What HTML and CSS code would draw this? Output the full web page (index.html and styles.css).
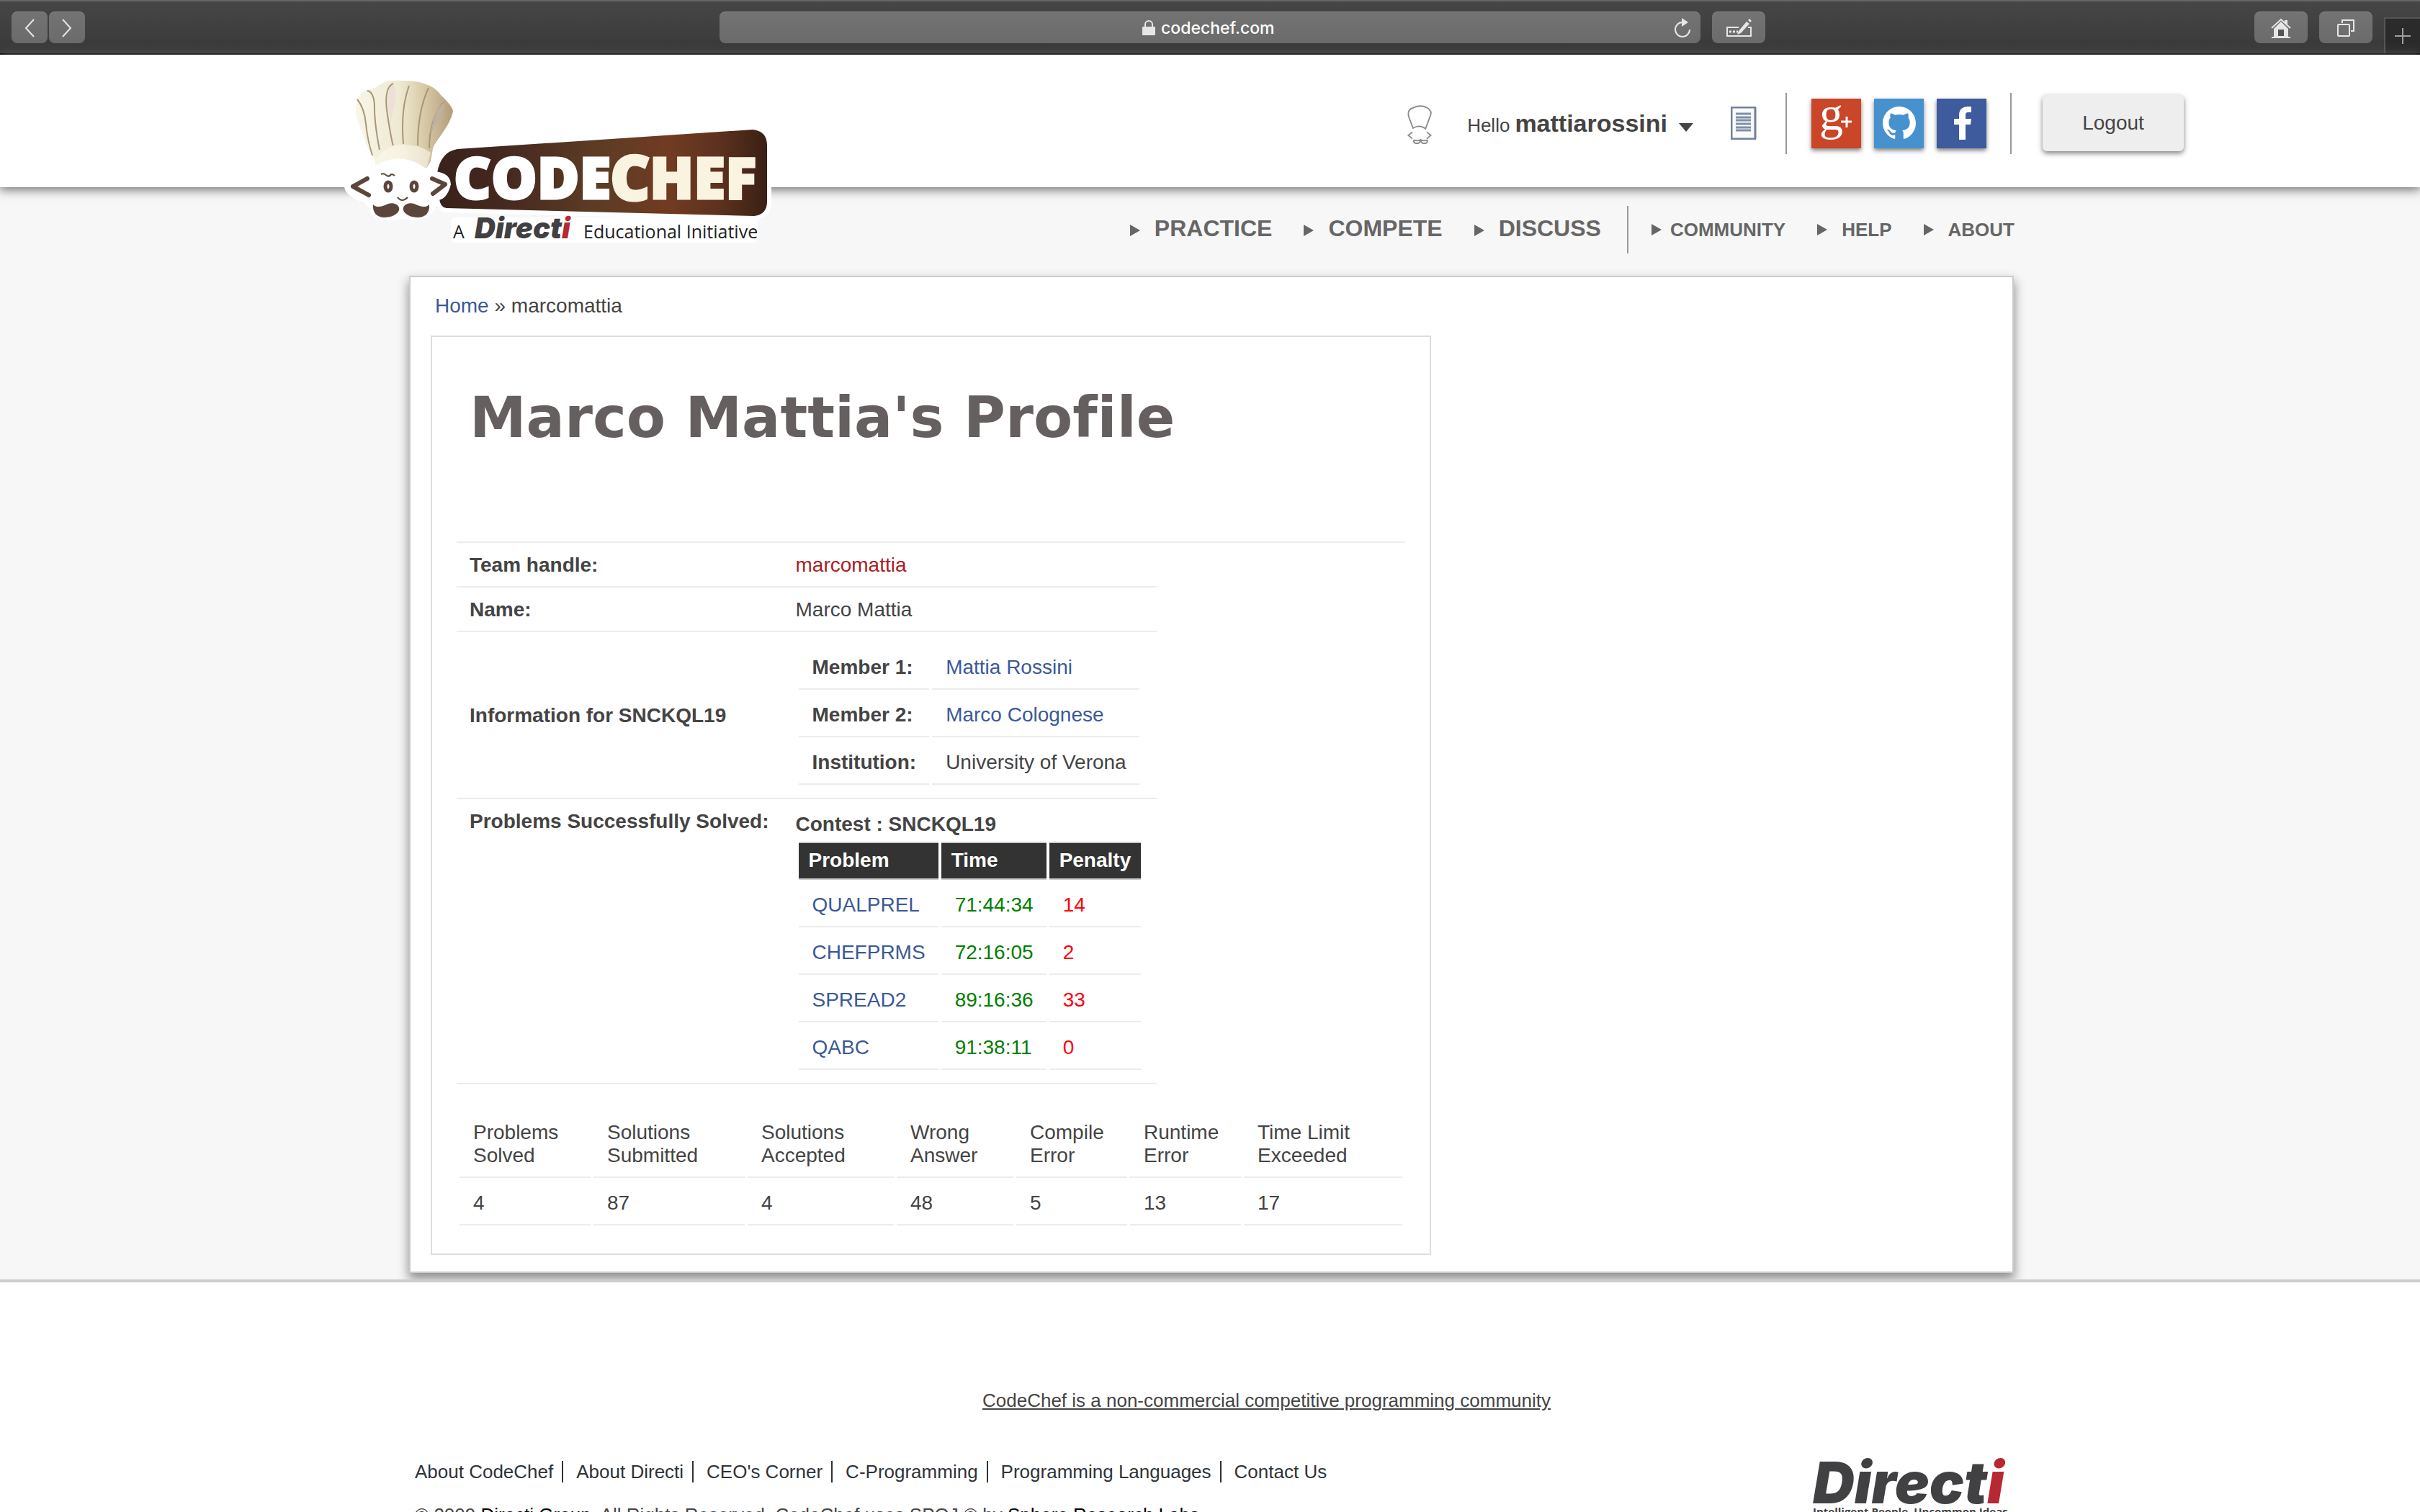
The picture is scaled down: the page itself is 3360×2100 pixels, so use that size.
FILE: index.html
```html
<!DOCTYPE html>
<html lang="en">
<head>
<meta charset="utf-8">
<title>marcomattia | CodeChef</title>
<link rel="stylesheet" href="styles.css">
</head>
<body>
<div class="browser-bar">
  <div class="bar-left">
    <button class="bar-btn nav-btn" type="button" aria-label="Back"><svg width="16" height="26" viewBox="0 0 16 26"><path d="M14 1 3 13l11 12" class="line"/></svg></button>
    <button class="bar-btn nav-btn" type="button" aria-label="Forward"><svg width="16" height="26" viewBox="0 0 16 26"><path d="M2 1l11 12L2 25" class="line"/></svg></button>
  </div>
  <div class="url-field">
    <label class="url-center">
      <svg width="18" height="22" viewBox="0 0 18 22"><rect x="0" y="9" width="18" height="12" rx="1" class="solid"/><path d="M4 10V6a5 5 0 0 1 10 0v4" class="line"/></svg>
      <input class="url-input" type="text" value="codechef.com" aria-label="Address">
    </label>
    <button class="reload" type="button" aria-label="Reload"><svg width="26" height="28" viewBox="0 0 26 28"><path d="M13 6a10 10 0 1 0 10 10" class="line"/><path d="M12 0l9 6-9 6z" class="solid"/></svg></button>
  </div>
  <div class="bar-right">
    <button class="bar-btn" type="button" aria-label="Autofill"><svg width="38" height="26" viewBox="0 0 38 26"><path d="M19 12H3v12h33V12h-4" class="line"/><path d="M6 18h3M11 18h3M16 18h2" class="line thin"/><path d="M30 4l4 3-12 13-5 2 2-5zM32 2l2-2 3 3-2 2z" class="solid"/></svg></button>
    <span class="spacer"></span>
    <button class="bar-btn" type="button" aria-label="Home"><svg width="28" height="28" viewBox="0 0 28 28"><path d="M14 5l10 10v11H4V15zM19 3h4v7l-4-4z" class="solid"/><path d="M1 14L14 2l13 12" class="line"/><path d="M1 27h26" class="line"/><rect x="10" y="16" width="8" height="9" fill="#555"/></svg></button>
    <button class="bar-btn" type="button" aria-label="Show tabs"><svg width="26" height="26" viewBox="0 0 26 26"><rect x="2" y="8" width="16" height="16" rx="1" class="line"/><path d="M8 6V2h16v15h-4" class="line"/></svg></button>
    <button class="new-tab" type="button" aria-label="New tab"><svg width="22" height="22" viewBox="0 0 22 22"><path d="M11 0v22M0 11h22" stroke="#a0a0a0" stroke-width="2"/></svg></button>
  </div>
</div>

<header class="site-header">
  <a class="logo" href="#" aria-label="CodeChef home">
    <svg width="610" height="245" viewBox="470 100 610 245">
      <defs>
        <linearGradient id="plate" x1="0" x2="1" y1="0" y2="0">
          <stop offset="0" stop-color="#38221a"/><stop offset=".2" stop-color="#452820"/><stop offset=".48" stop-color="#5c3c24"/><stop offset=".7" stop-color="#713b22"/><stop offset=".85" stop-color="#5d321e"/><stop offset="1" stop-color="#3b2014"/>
        </linearGradient>
        <linearGradient id="hat" x1="0" x2="1" y1="0" y2="0">
          <stop offset="0" stop-color="#f8f6e8"/><stop offset=".45" stop-color="#efe9d2"/><stop offset=".7" stop-color="#d8caa8"/><stop offset="1" stop-color="#b39c78"/>
        </linearGradient>
      </defs>
      <g class="halo">
        <path d="M635 207L1045 180Q1065 182 1065 202V280Q1065 298 1047 300L620 289Q611 288 610 276L607 240Q612 211 635 207z"/>
        <path d="M520 232Q556 212 596 236L604 245Q622 246 622 262Q618 278 604 276L598 288Q590 304 557 298Q520 306 516 284L508 276Q484 268 484 258Q496 244 512 244z"/>
        <path d="M632 308H1046V331H632z"/>
      </g>
      <path fill="url(#plate)" d="M635 207L1045 180Q1065 182 1065 202V280Q1065 298 1047 300L620 289Q611 288 610 276L607 240Q612 211 635 207z"/>
      <path fill="#fff" d="M520 232Q556 212 596 236L604 238Q625 240 626 256Q620 280 604 278L598 288Q590 304 557 298Q520 306 516 284L508 276Q480 268 480 258Q496 240 512 240z"/>
      <path fill="url(#hat)" d="M494 152C494 134 502 124 521 122C530 114 540 111 556 112C582 112 602 117 612 132Q627 146 629 154C626 174 604 196 601 206L598 224L592 234Q556 208 521 230V222Q508 204 506 192Q494 166 494 152z"/>
      <path fill="#fbf9ee" d="M521 222Q530 208 548 202Q578 198 598 212L592 234Q556 208 521 230z" opacity=".6"/>
      <g fill="none" stroke="#a89678" stroke-width="2">
        <path d="M496 138Q506 150 508 172T517 216"/><path d="M510 126Q520 128 520 150T527 208"/><path d="M546 116Q532 122 538 160T546 202"/><path d="M568 119Q556 152 560 200"/><path d="M595 122Q580 154 580 202"/><path d="M616 142Q596 166 596 206"/>
      </g>
      <path fill="#eee0d6" d="M546 117Q552 124 548 146L542 170Q534 124 546 117z"/>
      <path fill="#c0b0a0" d="M616 143Q618 150 610 164L598 186Q602 154 616 143z"/>
      <g fill="none" stroke="#5c463c" stroke-width="6" stroke-linecap="round" stroke-linejoin="round">
        <path d="M510 248L490 259L512 271"/><path d="M600 248L618 256L601 269"/>
      </g>
      <g fill="#fff" stroke="#5c463c" stroke-width="5"><ellipse cx="539" cy="259" rx="4" ry="6"/><ellipse cx="575" cy="259" rx="4" ry="6"/></g>
      <path d="M529 242q4-2 8 2q4 2 6-2q3 0 5 2M552 274q6 8 14 0" fill="none" stroke="#5c463c" stroke-width="2"/>
      <path fill="#5c463c" d="M518 284C524 290 532 286 539 283C548 280 556 286 554 292C552 298 543 302 534 302C522 302 517 294 518 284zM596 284C590 290 582 286 575 283C566 280 558 286 560 292C562 298 571 302 580 302C592 302 597 294 596 284z"/>
      <text x="630" y="276" class="logo-word white">CODE</text>
      <text x="847" y="278" class="logo-word cream big">C</text><text x="902" y="276" class="logo-word cream">HEF</text>
      <text x="629" y="331" class="logo-sub">A</text><text x="659" y="331" class="logo-directi">Direct<tspan class="red">i</tspan></text><text x="810" y="331" class="logo-sub">Educational Initiative</text>
    </svg>
  </a>
  <svg class="chef-icon" width="44" height="57" viewBox="0 0 48 62" fill="none" stroke="#8a8a8a" stroke-width="2"><path d="M14 38L8 22Q4 10 15 7Q25 2 35 7Q44 12 40 20L33 39Q24 32 14 38zM13 44l-6 5l6 5M35 44l6 5l-6 5"/><path d="M15 56q5 2 10 0q0 6-6 5q-4 0-4-5M36 56q-5 2-10 0q0 6 6 5q4 0 4-5"/></svg>
  <button class="user-menu" type="button">Hello <b>mattiarossini</b><svg width="20" height="12" viewBox="0 0 20 12"><path d="M0 0h20L10 12z" fill="#444"/></svg></button>
  <a class="doc-link" href="#" aria-label="My submissions"><svg width="36" height="46" viewBox="0 0 36 46"><rect x="1" y="1" width="33" height="44" rx="1" fill="#f8fafc" stroke="#71819a" stroke-width="3"/><path d="M7 10h21M7 15h21M7 19h21M7 24h21M7 29h21M7 33h21" stroke="#7f8fa8" stroke-width="3"/></svg></a>
  <span class="divider"></span>
  <div class="social">
    <a class="gplus" href="#" aria-label="Google Plus"><svg width="69" height="69" viewBox="0 0 69 69"><text x="11" y="43" class="g-letter">g</text><path d="M41 32h15M49 25v15" stroke="#fff" stroke-width="3"/></svg></a>
    <a class="github" href="#" aria-label="GitHub"><svg width="46" height="46" viewBox="0 0 16 16"><path fill="#fff" d="M8 0C3.58 0 0 3.58 0 8c0 3.54 2.29 6.53 5.47 7.59.4.07.55-.17.55-.38 0-.19-.01-.82-.01-1.49-2.01.37-2.53-.49-2.69-.94-.09-.23-.48-.94-.82-1.13-.28-.15-.68-.52-.01-.53.63-.01 1.08.58 1.23.82.72 1.21 1.87.87 2.33.66.07-.52.28-.87.51-1.07-1.78-.2-3.64-.89-3.64-3.95 0-.87.31-1.59.82-2.15-.08-.2-.36-1.02.08-2.12 0 0 .67-.21 2.2.82.64-.18 1.32-.27 2-.27s1.36.09 2 .27c1.53-1.04 2.2-.82 2.2-.82.44 1.1.16 1.92.08 2.12.51.56.82 1.27.82 2.15 0 3.07-1.87 3.75-3.65 3.95.29.25.54.73.54 1.48 0 1.07-.01 1.93-.01 2.2 0 .21.15.46.55.38A8.01 8.01 0 0 0 16 8c0-4.42-3.58-8-8-8z"/></svg></a>
    <a class="facebook" href="#" aria-label="Facebook"><svg width="24" height="46" viewBox="0 0 24 46"><path fill="#fff" d="M7 46V25H0V17H7V12Q7 1 18 0H24V8H19Q16 8 16 12V17H24L23 25H16V46z"/></svg></a>
  </div>
  <span class="divider"></span>
  <button class="logout" type="button">Logout</button>
</header>

<main class="content-area">
  <nav class="main-nav">
    <a class="major" href="#">PRACTICE</a>
    <a class="major" href="#">COMPETE</a>
    <a class="major" href="#">DISCUSS</a>
    <span class="nav-divider"></span>
    <a class="near" href="#">COMMUNITY</a>
    <a href="#">HELP</a>
    <a href="#">ABOUT</a>
  </nav>
  <div class="panel">
    <div class="breadcrumb"><a href="#">Home</a> » marcomattia</div>
    <section class="profile">
      <h1>Marco Mattia's Profile</h1>
      <hr>
      <table class="details">
        <tr><th scope="row">Team handle:</th><td class="handle">marcomattia</td></tr>
        <tr><th scope="row">Name:</th><td>Marco Mattia</td></tr>
        <tr class="nested"><th scope="row">Information for SNCKQL19</th><td>
          <table class="inner">
            <tr><th scope="row">Member 1:</th><td><a href="#">Mattia Rossini</a></td></tr>
            <tr><th scope="row">Member 2:</th><td><a href="#">Marco Colognese</a></td></tr>
            <tr><th scope="row">Institution:</th><td>University of Verona</td></tr>
          </table>
        </td></tr>
        <tr class="top"><th scope="row">Problems Successfully Solved:</th><td>
          <b class="contest">Contest : SNCKQL19</b>
          <table class="inner problems">
            <thead><tr><th>Problem</th><th>Time</th><th>Penalty</th></tr></thead>
            <tbody>
            <tr><td><a href="#">QUALPREL</a></td><td class="time">71:44:34</td><td class="penalty">14</td></tr>
            <tr><td><a href="#">CHEFPRMS</a></td><td class="time">72:16:05</td><td class="penalty">2</td></tr>
            <tr><td><a href="#">SPREAD2</a></td><td class="time">89:16:36</td><td class="penalty">33</td></tr>
            <tr><td><a href="#">QABC</a></td><td class="time">91:38:11</td><td class="penalty">0</td></tr>
            </tbody>
          </table>
        </td></tr>
      </table>
      <table class="inner stats">
        <colgroup><col class="c1"><col class="c2"><col class="c3"><col class="c4"><col class="c5"><col class="c5"><col></colgroup>
        <tr><td>Problems<br>Solved</td><td>Solutions<br>Submitted</td><td>Solutions<br>Accepted</td><td>Wrong<br>Answer</td><td>Compile<br>Error</td><td>Runtime<br>Error</td><td>Time Limit<br>Exceeded</td></tr>
        <tr><td>4</td><td>87</td><td>4</td><td>48</td><td>5</td><td>13</td><td>17</td></tr>
      </table>
    </section>
  </div>
</main>

<footer class="site-footer">
  <a class="tagline" href="#">CodeChef is a non-commercial competitive programming community</a>
  <div class="footer-row">
    <div>
      <nav class="footer-nav"><a href="#">About CodeChef</a><a href="#">About Directi</a><a href="#">CEO's Corner</a><a href="#">C-Programming</a><a href="#">Programming Languages</a><a href="#">Contact Us</a></nav>
      <p class="copyright">© 2009 <a href="#">Directi Group</a>. All Rights Reserved. CodeChef uses SPOJ © by <a href="#">Sphere Research Labs</a></p>
    </div>
    <a class="directi" href="#"><span class="directi-name">Direct<i>i</i></span><span class="directi-tag">Intelligent People. Uncommon Ideas.</span></a>
  </div>
</footer>
</body>
</html>
```
FILE: styles.css
```css
* { box-sizing: border-box; }
body {
  margin: 0;
  height: 100vh;
  overflow: hidden;
  background: #fff;
  color: #444;
  font: 28px/32px "Liberation Sans", Arial, sans-serif;
}
a { color: #3b5998; text-decoration: none; }
button { font: inherit; color: inherit; border: 0; background: none; padding: 0; }
svg { display: block; flex: none; }

/* browser toolbar */
.browser-bar {
  display: grid;
  grid-template-columns: 1fr minmax(0, 1362px) 1fr;
  height: 76px;
  padding-top: 14px;
  border-top: 2px solid #666;
  border-bottom: 2px solid #000;
  background: linear-gradient(#464646, #393939);
}
.bar-left { display: flex; gap: 2px; padding-left: 16px; }
.bar-right { display: flex; gap: 16px; padding-left: 16px; }
.bar-btn {
  width: 74px;
  height: 44px;
  display: flex;
  align-items: center;
  justify-content: center;
  border-radius: 8px;
  border-top: 1px solid #8a8a8a;
  background: linear-gradient(#737373, #6b6b6b);
}
.nav-btn { width: 50px; }
.spacer { flex: 1; }
.line { fill: none; stroke: #e6e6e6; stroke-width: 2; }
.thin { stroke-width: 3; }
.solid { fill: #e6e6e6; }
.url-field {
  display: flex;
  align-items: center;
  height: 44px;
  padding: 0 12px 0 40px;
  border-radius: 8px;
  border-top: 1px solid #8a8a8a;
  background: linear-gradient(#737373, #6b6b6b);
}
.url-center { flex: 1; display: flex; justify-content: center; align-items: center; gap: 8px; }
.url-input {
  width: 164px;
  padding: 0;
  border: 0;
  background: none;
  color: #fff;
  font: 500 23px/30px Inter, sans-serif;
}
.new-tab {
  width: 50px;
  height: 50px;
  margin-top: 8px;
  display: flex;
  align-items: center;
  justify-content: center;
  border-top: 2px solid #555;
  border-left: 2px solid #555;
  background: #2b2b2b;
}

/* site header */
.site-header {
  position: relative;
  z-index: 2;
  display: flex;
  justify-content: flex-end;
  align-items: center;
  height: 184px;
  padding: 6px 328px 0 0;
  background: #fff;
  box-shadow: 0 2px 14px 1px #666;
}
.logo { position: absolute; left: 470px; top: 24px; }
.halo { fill: #fff; stroke: #fff; stroke-width: 12px; stroke-linejoin: round; }
.logo-word { font: 800 80px "Open Sans", sans-serif; stroke-width: 3px; }
.big { font-size: 86px; }
.white { fill: #fff; stroke: #fff; }
.cream { fill: #f9f3e0; stroke: #f9f3e0; }
.logo-sub { font: 25px "Open Sans", sans-serif; fill: #222; }
.logo-directi { font: italic 900 40px Inter, sans-serif; fill: #414042; }
.red { fill: #b72832; }
.chef-icon { margin-right: 44px; }
.user-menu { display: flex; align-items: baseline; gap: 7px; font-size: 26px; white-space: nowrap; margin: 2px 52px 0 0; }
.user-menu b { font-size: 34px; margin-right: 9px; }
.doc-link { margin-right: 40px; }
.divider { width: 2px; height: 85px; background: #999; }
.social { display: flex; gap: 18px; margin: 0 33px 0 34px; }
.social a {
  width: 69px;
  height: 69px;
  display: flex;
  align-items: center;
  justify-content: center;
  box-shadow: 0 3px 6px rgba(0, 0, 0, .5);
}
.social .gplus { background: #cb4528; }
.social .github { background: #4792ce; }
.social .facebook { background: #3d5b9d; }
.facebook svg { margin-left: 2px; }
.g-letter { font: 66px "Liberation Serif", serif; fill: #fff; }
.logout {
  width: 196px;
  height: 78px;
  margin-left: 43px;
  border-radius: 6px;
  background: #eee;
  box-shadow: 0 3px 7px rgba(0, 0, 0, .5);
}

/* navigation */
.content-area {
  background: #f7f7f7;
  padding: 26px 0 9px 4px;
  overflow: hidden;
}
.main-nav {
  display: flex;
  align-items: center;
  justify-content: flex-end;
  height: 66px;
  padding: 0 563px 0 0;
}
.main-nav a { display: flex; align-items: center; font-size: 26px; font-weight: bold; color: #666; margin-left: 44px; }
.main-nav a::before {
  content: "";
  margin-right: 20px;
  border: 8px solid transparent;
  border-left: 14px solid #666;
  border-right: 0;
}
.main-nav a.major { font-size: 32px; padding-bottom: 4px; }
.main-nav a.major::before { margin-top: 6px; }
.main-nav a.near { margin-left: 32px; }
.main-nav a.near::before { margin-right: 12px; }
.nav-divider { width: 2px; height: 66px; margin-left: 36px; background: #999; }

/* profile panel */
.panel {
  max-width: 2228px;
  margin: 31px auto 0;
  padding: 22px 28px 23px;
  border: 2px solid #ccc;
  background: #fff;
  box-shadow: 0 8px 14px 1px #909090;
}
.breadcrumb { padding: 2px 6px 0; }
.profile {
  max-width: 1389px;
  margin-top: 25px;
  padding: 0 34px 35px 34px;
  border: 2px solid #ddd;
}
h1 {
  margin: 0;
  padding: 64px 18px 124px;
  font: bold 79px/96px "DejaVu Sans", Verdana, sans-serif;
  font-variant-ligatures: none;
  color: #655f5f;
}
hr { margin: 0; border: 0; border-top: 2px solid #ececec; }
table { border-spacing: 0; }
th, td { padding: 15px 18px 13px; border-bottom: 2px solid #ececec; text-align: left; }
td { padding-left: 19px; }
.details .handle { color: #aa1e25; }
.nested > td { padding-top: 14px; padding-bottom: 14px; }
.top > th, .top > td { vertical-align: top; }
.top > td { padding-bottom: 14px; }
.inner { border-spacing: 4px; }
.inner th { padding-left: 19px; }
.contest { display: block; line-height: 40px; }
.problems thead th {
  padding: 8px 14px 9px;
  border-top: 2px solid #ccc;
  border-bottom: 2px solid #ccc;
  background: #333;
  color: #fff;
}
.time { color: green; }
.penalty { color: #f01; }
.stats { width: 100%; margin-top: 32px; table-layout: fixed; }
.c1 { width: 182px; }
.c2 { width: 210px; }
.c3 { width: 203px; }
.c4 { width: 162px; }
.c5 { width: 154px; }

/* footer */
.site-footer {
  position: relative;
  padding: 148px 568px 0 576px;
  border-top: 4px solid #ccc;
  background: #fff;
  font-size: 26px;
}
.tagline { display: block; padding-left: 788px; color: #444; text-decoration: underline; }
.footer-row { display: flex; justify-content: space-between; margin-top: 68px; }
.footer-nav { display: flex; line-height: 30px; }
.footer-nav a { color: #2e3338; padding-right: 12px; margin-right: 18px; border-right: 2px solid #2e3338; }
.footer-nav a:last-child { border: 0; }
.copyright { margin: 29px 0 0; }
.copyright a { color: #000; }
.directi { display: flex; flex-direction: column; color: #414042; }
.directi-name { font: italic 900 80px/60px Inter, sans-serif; }
.directi-name i { color: #b72832; }
.directi-tag { font: bold 15px/20px "Open Sans", sans-serif; }
```
